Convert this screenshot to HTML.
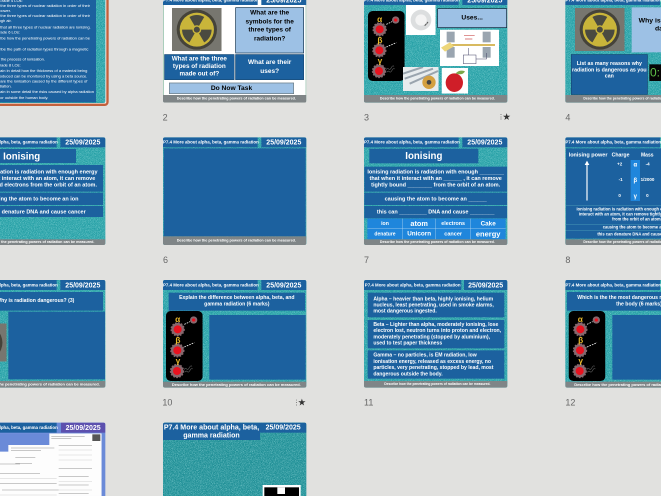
<!DOCTYPE html>
<html><head><meta charset="utf-8"><title>Slides</title>
<style>
html,body{margin:0;padding:0;width:661px;height:496px;overflow:hidden;background:#e1e1df}
#v{position:absolute;left:0;top:0;width:661px;height:496px;overflow:hidden}
#st{position:absolute;left:0;top:0;width:1983px;height:1488px;overflow:hidden;transform:scale(.33333);transform-origin:0 0;filter:blur(1.1px);font-family:"Liberation Sans",sans-serif}
.s{position:absolute;width:430px;height:323px;background:#26a0a6;border-radius:6px;overflow:hidden}
.n{position:absolute;left:0;top:0;width:430px;height:323px}
.h,.d{position:absolute;top:0;height:30px;background:#1c619f;color:#fff;font-weight:bold;white-space:nowrap;text-align:center}
.h{left:0;width:284px;font-size:13.2px;line-height:30px}
.d{left:295px;width:135px;font-size:21px;line-height:31px}
.f{position:absolute;left:0;top:300px;width:430px;height:23px;background:#7f8587;color:#fff;font-weight:bold;font-size:10.7px;line-height:23px;text-align:center;white-space:nowrap;padding-left:10px;box-sizing:border-box}
.b{position:absolute;background:#1c619f}
.l{position:absolute;background:#9dc1e5;border:2px solid #14344f;box-sizing:border-box}
.x{position:absolute;color:#fff;font-weight:bold;white-space:nowrap;text-align:center}
.k{color:#000}
.num{position:absolute;font-size:27px;color:#666;line-height:30px}
.star{position:absolute;font-size:29px;color:#333;line-height:30px}
.dots{position:absolute;width:2px;height:20px;background:repeating-linear-gradient(#555 0 3px,transparent 3px 7px)}
.r{position:absolute;left:0;color:#fff;font-size:12px;line-height:15px;text-align:right;white-space:nowrap}
.sv{position:absolute;overflow:hidden}
.m{font-size:16.5px}
</style></head><body>
<svg width="0" height="0" style="position:absolute">
<defs>
<filter id="nf" x="0" y="0" width="100%" height="100%"><feTurbulence type="fractalNoise" baseFrequency=".55" numOctaves="2" seed="4"/><feColorMatrix values="0 0 0 0 .5 0 0 0 0 .88 0 0 0 0 .88 0 0 0 1.6 -.7"/></filter>
<symbol id="rad" viewBox="0 0 148 129" preserveAspectRatio="none">
<rect width="148" height="129" fill="#77766f"/>
<circle cx="74" cy="65" r="60" fill="#45433a"/>
<circle cx="74" cy="65" r="51" fill="#c9b53a"/>
<g fill="#4a4a40"><path d="M52 26.9A44 44 0 0 1 96 26.9L80.5 53.7A13 13 0 0 0 67.5 53.7Z"/><path d="M118 65A44 44 0 0 1 96 103.1L80.5 76.3A13 13 0 0 0 87 65Z"/><path d="M52 103.1A44 44 0 0 1 30 65L61 65A13 13 0 0 0 67.5 76.3Z"/><circle cx="74" cy="65" r="9"/></g>
</symbol>
<symbol id="at" viewBox="0 0 110 210" preserveAspectRatio="none">
<rect width="110" height="210" rx="14" fill="#000"/>
<g fill="#86686e"><circle cx="83" cy="27" r="11"/><circle cx="35" cy="55" r="19"/><circle cx="34" cy="118" r="19"/><circle cx="33" cy="180" r="19"/></g>
<g fill="none" stroke="#86686e" stroke-width="5" stroke-dasharray="5 4"><circle cx="35" cy="55" r="19"/><circle cx="34" cy="118" r="19"/><circle cx="33" cy="180" r="19"/></g>
<g fill="#e8121f"><circle cx="83" cy="27" r="5"/><circle cx="35" cy="55" r="12"/><circle cx="34" cy="118" r="12"/><circle cx="33" cy="180" r="12"/></g>
<g stroke="#eee" stroke-width="2.5" stroke-dasharray="5 3" fill="none"><path d="M55 40L72 32"/><path d="M55 108L85 95"/></g>
<path d="M54 176q4-6 8-2t8-4t8-4" stroke="#555" stroke-width="2" fill="none"/>
<path d="M56 184q4-6 8-2t8-4t8-4" stroke="#555" stroke-width="2" fill="none"/>
<g fill="#e9b92c" font-family="Liberation Sans,sans-serif" font-weight="bold" font-size="25" text-anchor="middle"><text x="35" y="33">α</text><text x="36" y="96">β</text><text x="36" y="157">γ</text></g>
</symbol>
</defs></svg>
<div id="v"><div id="st">

<!-- orange selection -->
<div style="position:absolute;left:-124px;top:-25px;width:450px;height:343px;border:7px solid #c2603c;box-sizing:border-box;border-radius:12px;background:#f2eeea"></div>

<!-- slide 1 -->
<div class="s" style="left:-114px;top:-15px;height:324px">
<svg class="n"><rect width="430" height="323" filter="url(#nf)"/></svg>
<div class="b" style="left:0;top:0;width:402px;height:322px"></div>
<div class="r" style="width:182px;top:10px">Grade 4 LOs:</div>
<div class="r" style="width:384px;top:25px">State the three types of nuclear radiation in order of their</div>
<div class="r" style="width:147px;top:40px">ionising power.</div>
<div class="r" style="width:384px;top:55px">State the three types of nuclear radiation in order of their</div>
<div class="r" style="width:149px;top:70px">range through air.</div>
<div class="r" style="width:386px;top:90px">State that all three types of nuclear radiation are ionising.</div>
<div class="r" style="width:174px;top:105px">Grade 6 LOs:</div>
<div class="r" style="width:384px;top:123px">Describe how the penetrating powers of radiation can be</div>
<div class="r" style="width:379px;top:155px">Describe the path of radiation types through a magnetic</div>
<div class="r" style="width:249px;top:186px">Describe the process of ionisation.</div>
<div class="r" style="width:176px;top:203px">Grade 8 LOs:</div>
<div class="r" style="width:376px;top:220px">Explain in detail how the thickness of a material being</div>
<div class="r" style="width:376px;top:236px">produced can be monitored by using a beta source.</div>
<div class="r" style="width:376px;top:251px">Compare the ionisation caused by the different types of</div>
<div class="r" style="width:149px;top:266px">radiation.</div>
<div class="r" style="width:396px;top:283px">Explain in some detail the risks caused by alpha radiation</div>
<div class="r" style="width:259px;top:301px">inside or outside the human body.</div>
</div>

<!-- slide 2 -->
<div class="s" style="left:489px;top:-15px;background:#fff;box-shadow:inset 0 0 0 2px #7fb59a">
<div class="h">P7.4 More about alpha, beta, gamma radiation</div><div class="d">25/09/2025</div>
<svg class="sv" style="left:27px;top:39px;width:149px;height:129px"><use href="#rad" width="149" height="129"/></svg>
<div class="l x k" style="left:217px;top:37px;width:206px;height:138px;font-size:19.5px;line-height:25.5px;padding-top:2px">What are the<br>symbols for the<br>three types of<br>radiation?</div>
<div class="b x" style="left:4px;top:178px;width:210px;height:77px;font-size:19px;line-height:23px;border:1.5px solid #14344f;box-sizing:border-box">What are the three<br>types of radiation<br>made out of?</div>
<div class="b x" style="left:217px;top:178px;width:206px;height:77px;font-size:19.5px;line-height:27px;padding-top:9px;border:1.5px solid #14344f;box-sizing:border-box">What are their<br>uses?</div>
<div class="l x k" style="left:18px;top:263px;width:375px;height:34px;font-size:20px;line-height:28px;border-color:#6b7a80">Do Now Task</div>
<div class="f" style="font-size:11.1px">Describe how the penetrating powers of radiation can be measured.</div>
</div>
<div class="num" style="left:488px;top:337px">2</div>

<!-- slide 3 -->
<div class="s" style="left:1092px;top:-15px">
<svg class="n"><rect width="430" height="323" filter="url(#nf)"/></svg>
<div class="h">P7.4 More about alpha, beta, gamma radiation</div><div class="d">25/09/2025</div>
<svg class="sv" style="left:12px;top:48px;width:110px;height:210px"><use href="#at" width="110" height="210"/></svg>
<svg class="sv" style="left:126px;top:30px;width:89px;height:90px"><rect width="89" height="90" fill="#fff"/><circle cx="45" cy="45" r="31" fill="#dcdedf"/><circle cx="45" cy="45" r="17" fill="#f4f4f4"/><path d="M56 62l5-5M62 56l4-5" stroke="#555" stroke-width="3"/></svg>
<div class="l x k" style="left:220px;top:40px;width:209px;height:59px;font-size:20px;line-height:52px;background:#9dc1e5;border-color:#0a2034">Uses...</div>
<svg class="sv" style="left:228px;top:104px;width:177px;height:109px"><rect width="177" height="109" fill="#fff"/><g fill="#9aa5b0"><rect x="20" y="6" width="24" height="32"/><rect x="128" y="6" width="24" height="32"/><rect x="20" y="52" width="24" height="32"/><rect x="128" y="52" width="24" height="32"/></g><path d="M25 46H165" stroke="#d2b14a" stroke-width="5"/><path d="M3 54L30 38L42 50L15 66Z" fill="#edd67a"/><rect x="70" y="76" width="38" height="26" fill="#fff" stroke="#446" stroke-width="1.5"/><path d="M85 76V55M108 88H140V70" stroke="#446" fill="none" stroke-width="1.5"/><path d="M72 18h32M75 28h22" stroke="#c55" stroke-width="2"/></svg>
<svg class="sv" style="left:117px;top:216px;width:107px;height:72px"><rect width="107" height="72" fill="#e8ecee"/><path d="M0 20L60 0M5 35L90 5M20 50L105 12" stroke="#9aa4ae" stroke-width="6"/><circle cx="78" cy="46" r="20" fill="#d4a040"/><circle cx="78" cy="46" r="7" fill="#444"/></svg>
<svg class="sv" style="left:233px;top:219px;width:79px;height:77px"><rect width="79" height="77" fill="#fff"/><ellipse cx="38" cy="44" rx="26" ry="28" fill="#cf1e28"/><path d="M42 16q12-12 28-6q-8 14-28 6" fill="#7ba84a"/></svg>
<div class="f">Describe how the penetrating powers of radiation can be measured.</div>
</div>
<div class="num" style="left:1092px;top:337px">3</div>
<div class="dots" style="left:1502px;top:342px"></div><div class="star" style="left:1507px;top:336px">★</div>

<!-- slide 4 -->
<div class="s" style="left:1696px;top:-15px">
<svg class="n"><rect width="430" height="323" filter="url(#nf)"/></svg>
<div class="h">P7.4 More about alpha, beta, gamma radiation</div><div class="d">25/09/2025</div>
<svg class="sv" style="left:29px;top:39px;width:149px;height:129px"><use href="#rad" width="149" height="129"/></svg>
<div class="b" style="left:199px;top:37px;width:224px;height:135px;background:#9dc1e5"></div>
<div class="x k" style="left:220px;top:64px;font-size:20.5px;line-height:24px">Why is radiation so</div>
<div class="x k" style="left:269px;top:88px;font-size:20.5px;line-height:24px">dangerous?</div>
<div class="b x" style="left:17px;top:178px;width:230px;height:121px;font-size:15.8px;line-height:19px;padding-top:17px;box-sizing:border-box;border:1.5px solid #0f2d4a">List as many reasons why<br>radiation is dangerous as you<br>can</div>
<div class="x" style="left:252px;top:208px;width:90px;height:50px;background:#050505;color:#5fc24a;font-size:36px;line-height:50px;text-align:left;padding-left:2px;font-weight:normal">0:</div>
<div class="f" style="font-size:10.3px">Describe how the penetrating powers of radiation can be measured.</div>
</div>
<div class="num" style="left:1696px;top:337px">4</div>

<!-- slide 5 -->
<div class="s" style="left:-114px;top:412px">
<svg class="n"><rect width="430" height="323" filter="url(#nf)"/></svg>
<div class="h">P7.4 More about alpha, beta, gamma radiation</div><div class="d">25/09/2025</div>
<div class="b x" style="left:16px;top:35px;width:326px;height:42px;font-size:29px;line-height:44px">Ionising</div>
<div class="b x m" style="left:0;top:83px;width:423px;height:80px;line-height:19px;padding-top:12px;box-sizing:border-box">Ionising radiation is radiation with enough energy<br>that when it interact with an atom, it can remove<br>tightly bound electrons from the orbit of an atom.</div>
<div class="b x m" style="left:0;top:166px;width:423px;height:37px;line-height:37px">causing the atom to become an ion</div>
<div class="b x m" style="left:0;top:206px;width:423px;height:33px;line-height:35px">this can denature DNA and cause cancer</div>
<div class="f" style="top:306px;height:17px;line-height:17px;font-size:11px">Describe how the penetrating powers of radiation can be measured.</div>
</div>

<!-- slide 6 -->
<div class="s" style="left:489px;top:412px">
<svg class="n"><rect width="430" height="323" filter="url(#nf)"/></svg>
<div class="h">P7.4 More about alpha, beta, gamma radiation</div><div class="d">25/09/2025</div>
<div class="b" style="left:2px;top:33px;width:426px;height:264px"></div>
<div class="f" style="top:297px;height:26px;line-height:26px;font-size:11.1px">Describe how the penetrating powers of radiation can be measured.</div>
</div>
<div class="num" style="left:489px;top:765px">6</div>

<!-- slide 7 -->
<div class="s" style="left:1092px;top:412px">
<svg class="n"><rect width="430" height="323" filter="url(#nf)"/></svg>
<div class="h">P7.4 More about alpha, beta, gamma radiation</div><div class="d">25/09/2025</div>
<div class="b x" style="left:16px;top:34px;width:327px;height:44px;font-size:29px;line-height:44px">Ionising</div>
<div class="b x m" style="left:1px;top:88px;width:428px;height:75px;line-height:19px;padding-top:7px;box-sizing:border-box">Ionising radiation is radiation with enough ________<br>that when it interact with an ______ , it can remove<br>tightly bound ________ from the orbit of an atom.</div>
<div class="b x m" style="left:1px;top:166px;width:428px;height:37px;line-height:37px">causing the atom to become an ______</div>
<div class="b x m" style="left:1px;top:206px;width:428px;height:37px;line-height:37px">this can _________ DNA and cause ________</div>
<div class="b" style="left:10px;top:244px;width:415px;height:62px;background:#1f86dc"></div>
<div class="b" style="left:10px;top:274px;width:415px;height:1px;background:#cfe4f5"></div>
<div class="b" style="left:116px;top:244px;width:1px;height:62px;background:#cfe4f5"></div>
<div class="b" style="left:215px;top:244px;width:1px;height:62px;background:#cfe4f5"></div>
<div class="b" style="left:320px;top:244px;width:1px;height:62px;background:#cfe4f5"></div>
<div class="x" style="left:10px;top:244px;width:106px;font-size:15.5px;line-height:30px">ion</div>
<div class="x" style="left:116px;top:244px;width:99px;font-size:22px;line-height:30px">atom</div>
<div class="x" style="left:215px;top:244px;width:105px;font-size:16px;line-height:30px">electrons</div>
<div class="x" style="left:320px;top:244px;width:105px;font-size:19px;line-height:30px">Cake</div>
<div class="x" style="left:10px;top:275px;width:106px;font-size:15px;line-height:30px">denature</div>
<div class="x" style="left:116px;top:275px;width:99px;font-size:19px;line-height:30px">Unicorn</div>
<div class="x" style="left:215px;top:275px;width:105px;font-size:16.5px;line-height:30px">cancer</div>
<div class="x" style="left:320px;top:275px;width:105px;font-size:22.5px;line-height:30px">energy</div>
<div class="f" style="top:306px;height:17px;line-height:17px">Describe how the penetrating powers of radiation can be measured.</div>
</div>
<div class="num" style="left:1092px;top:765px">7</div>

<!-- slide 8 -->
<div class="s" style="left:1696px;top:412px">
<svg class="n"><rect width="430" height="323" filter="url(#nf)"/></svg>
<div class="h">P7.4 More about alpha, beta, gamma radiation</div><div class="d">25/09/2025</div>
<div class="b" style="left:2px;top:33px;width:426px;height:271px"></div>
<div class="x" style="left:10px;top:45px;font-size:16.5px;line-height:16px">Ionising power</div>
<div class="x" style="left:139px;top:45px;font-size:15.5px;line-height:16px">Charge</div>
<div class="x" style="left:227px;top:45px;font-size:15px;line-height:16px">Mass</div>
<svg class="sv" style="left:55px;top:68px;width:20px;height:122px"><path d="M10 122V10" stroke="#fff" stroke-width="3.5"/><path d="M3 15L10 2L17 15Z" fill="#fff"/></svg>
<div class="b" style="left:196px;top:68px;width:28px;height:123px;background:#1f86dc"></div>
<div class="x" style="left:196px;top:72px;width:28px;font-size:18px;line-height:20px">α</div>
<div class="x" style="left:196px;top:118px;width:28px;font-size:18px;line-height:20px">β</div>
<div class="x" style="left:196px;top:166px;width:28px;font-size:18px;line-height:20px">γ</div>
<div class="x" style="left:153px;top:74px;width:20px;font-size:13.5px;line-height:14px">+2</div>
<div class="x" style="left:156px;top:120px;width:20px;font-size:13.5px;line-height:14px">-1</div>
<div class="x" style="left:153px;top:168px;width:20px;font-size:13.5px;line-height:14px">0</div>
<div class="x" style="left:237px;top:74px;width:20px;font-size:13.5px;line-height:14px">-4</div>
<div class="x" style="left:226px;top:120px;font-size:13.5px;line-height:14px">1/2000</div>
<div class="x" style="left:236px;top:168px;width:20px;font-size:13.5px;line-height:14px">0</div>
<div class="b" style="left:2px;top:203px;width:426px;height:1px;background:#5fb5c0"></div>
<div class="b" style="left:2px;top:260px;width:426px;height:1px;background:#5fb5c0"></div>
<div class="b" style="left:2px;top:280px;width:426px;height:1px;background:#5fb5c0"></div>
<div class="x" style="left:2px;top:208px;width:426px;font-size:12.3px;line-height:15px">Ionising radiation is radiation with enough energy that when it<br>interact with an atom, it can remove tightly bound electrons<br>from the orbit of an atom.</div>
<div class="x" style="left:2px;top:263px;width:426px;font-size:12.3px;line-height:15px">causing the atom to become an ion</div>
<div class="x" style="left:2px;top:284px;width:426px;font-size:12.3px;line-height:15px">this can denature DNA and cause cancer</div>
<div class="f" style="top:306px;height:17px;line-height:17px;font-size:10.3px">Describe how the penetrating powers of radiation can be measured.</div>
</div>
<div class="num" style="left:1696px;top:765px">8</div>

<!-- slide 9 -->
<div class="s" style="left:-114px;top:840px">
<svg class="n"><rect width="430" height="323" filter="url(#nf)"/></svg>
<div class="h">P7.4 More about alpha, beta, gamma radiation</div><div class="d">25/09/2025</div>
<div class="b x" style="left:17px;top:36px;width:406px;height:56px;line-height:52px;font-size:15.4px">Why is radiation dangerous? (3)</div>
<svg class="sv" style="left:0;top:130px;width:134px;height:115px"><use href="#rad" width="134" height="115"/></svg>
<div class="b" style="left:139px;top:95px;width:290px;height:203px"></div>
<div class="f" style="top:303px;height:20px;line-height:20px;font-size:12px">Describe how the penetrating powers of radiation can be measured.</div>
</div>

<!-- slide 10 -->
<div class="s" style="left:489px;top:840px">
<svg class="n"><rect width="430" height="323" filter="url(#nf)"/></svg>
<div class="h">P7.4 More about alpha, beta, gamma radiation</div><div class="d">25/09/2025</div>
<div class="b x" style="left:17px;top:38px;width:409px;height:54px;line-height:20px;padding-top:5px;box-sizing:border-box;font-size:15.4px">Explain the difference between alpha, beta, and<br>gamma radiation (6 marks)</div>
<svg class="sv" style="left:9px;top:93px;width:110px;height:210px"><use href="#at" width="110" height="210"/></svg>
<div class="b" style="left:139px;top:105px;width:289px;height:194px"></div>
<div class="f" style="top:305px;height:18px;line-height:18px;font-size:12px">Describe how the penetrating powers of radiation can be measured.</div>
</div>
<div class="num" style="left:487px;top:1193px">10</div>
<div class="dots" style="left:888px;top:1199px"></div><div class="star" style="left:893px;top:1193px">★</div>

<!-- slide 11 -->
<div class="s" style="left:1092px;top:840px">
<svg class="n"><rect width="430" height="323" filter="url(#nf)"/></svg>
<div class="h" style="width:292px">P7.4 More about alpha, beta, gamma radiation</div><div class="d" style="left:300px;width:130px">25/09/2025</div>
<div class="b x" style="left:11px;top:38px;width:410px;height:74px;line-height:18.5px;text-align:left;padding:10px 0 0 17px;box-sizing:border-box;font-size:15.3px">Alpha – heavier than beta, highly ionising, helium<br>nucleus, least penetrating, used in smoke alarms,<br>most dangerous ingested.</div>
<div class="b x" style="left:11px;top:120px;width:410px;height:85px;line-height:18.4px;text-align:left;padding:5px 0 0 17px;box-sizing:border-box;font-size:15.3px">Beta – Lighter than alpha, moderately ionising, lose<br>electron lost, neutron turns into proton and electron,<br>moderately penetrating (stopped by aluminium),<br>used to test paper thickness</div>
<div class="b x" style="left:11px;top:211px;width:410px;height:85px;line-height:18.6px;text-align:left;padding:6px 0 0 17px;box-sizing:border-box;font-size:15.3px">Gamma – no particles, is EM radiation, low<br>ionisation energy, released as excess energy, no<br>particles, very penetrating, stopped by lead, most<br>dangerous outside the body.</div>
<div class="f" style="top:303px;height:20px;line-height:20px;font-size:9.9px">Describe how the penetrating powers of radiation can be measured.</div>
</div>
<div class="num" style="left:1092px;top:1193px">11</div>

<!-- slide 12 -->
<div class="s" style="left:1696px;top:840px">
<svg class="n"><rect width="430" height="323" filter="url(#nf)"/></svg>
<div class="h">P7.4 More about alpha, beta, gamma radiation</div><div class="d">25/09/2025</div>
<div class="b x" style="left:5px;top:36px;width:432px;height:56px;line-height:19px;padding-top:7px;box-sizing:border-box;font-size:15.4px">Which is the the most dangerous radiation outside<br>the body (6 marks)</div>
<svg class="sv" style="left:10px;top:93px;width:110px;height:210px"><use href="#at" width="110" height="210"/></svg>
<div class="b" style="left:141px;top:105px;width:287px;height:194px"></div>
<div class="f" style="top:305px;height:18px;line-height:18px;font-size:12px">Describe how the penetrating powers of radiation can be measured.</div>
</div>
<div class="num" style="left:1696px;top:1193px">12</div>

<!-- slide 13 (cut off by the frame) -->
<div class="s" style="left:-114px;top:1268px;height:220px;background:#6a8ad8;border-radius:6px 6px 0 0">
<div class="h">P7.4 More about alpha, beta, gamma radiation</div><div class="d" style="background:#5c50ae;left:297px;width:133px">25/09/2025</div>
<svg class="sv" style="left:0;top:32px;width:419px;height:188px"><rect width="419" height="188" fill="#fdfdfd"/><path d="M0 0H262V35H139V55H0Z" fill="#6a8ad8"/><rect x="391" y="3" width="24" height="20" fill="#555"/><g stroke="#777" stroke-width="1.2"><path d="M268 10h100M268 16h60M290 36h100M147 44h130M147 52h90M160 72h60M160 90h50M114 92h60M114 120h120M114 150h170M120 170h170M290 105h100M290 130h90M290 155h90M290 180h90M0 90h60M0 110h80M0 130h100M0 150h100"/></g><g stroke="#bbb" stroke-width="1"><path d="M290 50h100M290 65h100M290 80h100M290 145h100M290 170h100M114 135h170M114 185h170M0 170h100"/></g></svg>
</div>

<!-- slide 14 (cut off by the frame) -->
<div class="s" style="left:489px;top:1268px;height:220px;background:#1f8f96;border-radius:6px 6px 0 0">
<svg class="n" style="height:220px"><rect width="430" height="220" filter="url(#nf)"/></svg>
<div class="h" style="width:291px;height:52px;font-size:21.2px;line-height:23.5px;padding-top:2px;box-sizing:border-box">P7.4 More about alpha, beta,<br>gamma radiation</div>
<div class="d" style="left:291px;width:139px;height:30px;line-height:30px">25/09/2025</div>
<div style="position:absolute;left:299px;top:187px;width:114px;height:33px;background:#fff"></div>
<div style="position:absolute;left:304px;top:194px;width:104px;height:26px;background:#000"></div>
<div style="position:absolute;left:343px;top:194px;width:23px;height:20px;background:#fff"></div>
</div>

</div></div>
</body></html>
